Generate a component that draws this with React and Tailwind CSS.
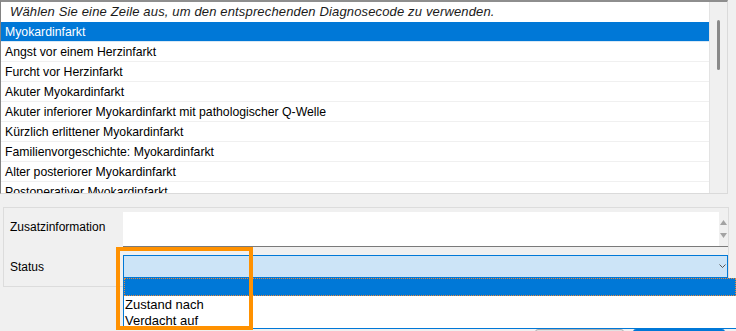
const rows = [
  "Angst vor einem Herzinfarkt",
  "Furcht vor Herzinfarkt",
  "Akuter Myokardinfarkt",
  "Akuter inferiorer Myokardinfarkt mit pathologischer Q-Welle",
  "Kürzlich erlittener Myokardinfarkt",
  "Familienvorgeschichte: Myokardinfarkt",
  "Alter posteriorer Myokardinfarkt",
  "Postoperativer Myokardinfarkt",
];

export default function App() {
  return (
    <div className="relative w-[736px] h-[331px] overflow-hidden bg-[#f0f0f0] font-['Liberation_Sans',Arial,sans-serif] text-[12px] text-black">
      {/* Listbox */}
      <div className="w-[728px] h-[194px] flex overflow-hidden bg-white border-t-2 border-t-[#8e8e8e] border-l border-l-[#828282] border-r border-r-[#dadada] border-b border-b-[#dadada]">
        <div className="flex-1 min-w-0 flex flex-col text-[12.25px]">
          <div className="h-[20px] shrink-0 flex items-center pl-[9px] italic text-[13px] tracking-[0.15px] text-[#1a1a1a] whitespace-nowrap">
            Wählen Sie eine Zeile aus, um den entsprechenden Diagnosecode zu verwenden.
          </div>
          <div className="h-[20px] shrink-0 flex items-center pl-[4px] pt-[1px] bg-[#0078d7] text-white border-b border-b-[#d9e8f5] whitespace-nowrap">
            Myokardinfarkt
          </div>
          {rows.map((r) => (
            <div
              key={r}
              className="h-[20px] shrink-0 flex items-center pl-[4px] pt-[1px] border-b border-b-[#f0f0f0] whitespace-nowrap"
            >
              {r}
            </div>
          ))}
        </div>
        <div className="w-[18px] shrink-0 bg-[#f0f0f0] border-l border-l-[#e3e3e3] flex justify-center">
          <div className="mt-[18px] w-[3px] h-[50px] rounded-full bg-[#8a8a8a]" />
        </div>
      </div>

      {/* Group box */}
      <div className="mt-[13px] ml-[3px] w-[726px] h-[80px] border border-[#dcdcdc] pt-[4px] grid grid-cols-[119px_1fr] gap-y-[8px] content-start">
        <div className="pl-[6px] pt-[8px] leading-[14px]">Zusatzinformation</div>
        <div className="h-[35px] flex bg-white border-b border-b-[#7a7a7a]">
          <div className="flex-1" />
          <div className="w-[9px] bg-[#f0f0f0] flex flex-col items-center justify-between py-[8px]">
            <svg width="7" height="5" viewBox="0 0 7 5">
              <path d="M3.5 0 L7 5 L0 5 Z" fill="#a3a3a3" />
            </svg>
            <svg width="7" height="5" viewBox="0 0 7 5">
              <path d="M0 0 L7 0 L3.5 5 Z" fill="#a3a3a3" />
            </svg>
          </div>
        </div>
        <div className="pl-[6px] flex items-center leading-[14px]">Status</div>
        <div className="h-[23px] bg-[#cce4f7] border border-[#0078d7] flex items-center justify-end pr-[1px]">
          <svg width="7" height="5" viewBox="0 0 7 5">
            <path d="M0.5 0.5 L3.5 3.5 L6.5 0.5" fill="none" stroke="#555" strokeWidth="1" />
          </svg>
        </div>
      </div>

      {/* Buttons (partially visible) */}
      <div className="mt-[42px] flex justify-end gap-[9px] pr-[11px]">
        <div className="w-[89px] h-[23px] rounded-[3px] border border-[#adadad] bg-[#e1e1e1]" />
        <div className="w-[92px] h-[23px] rounded-[3px] border-2 border-[#0078d7] bg-[#e1e1e1]" />
      </div>

      {/* Dropdown list overlay */}
      <div className="absolute left-[123px] top-[278px] w-[613px] bg-white border-l border-l-[#0078d7] border-b border-b-[#0078d7] text-[13px]">
        <div className="h-[18px] bg-[#0078d7] border border-dotted border-[#e8893a]" />
        <div className="h-[16px] flex items-center pl-[1px] leading-[15px]">Zustand nach</div>
        <div className="h-[16px] flex items-center pl-[1px] leading-[15px]">Verdacht auf</div>
      </div>

      {/* Annotation */}
      <div className="absolute left-[116px] top-[247px] w-[137px] h-[83px] border-4 border-[#ff9100]" />
    </div>
  );
}
